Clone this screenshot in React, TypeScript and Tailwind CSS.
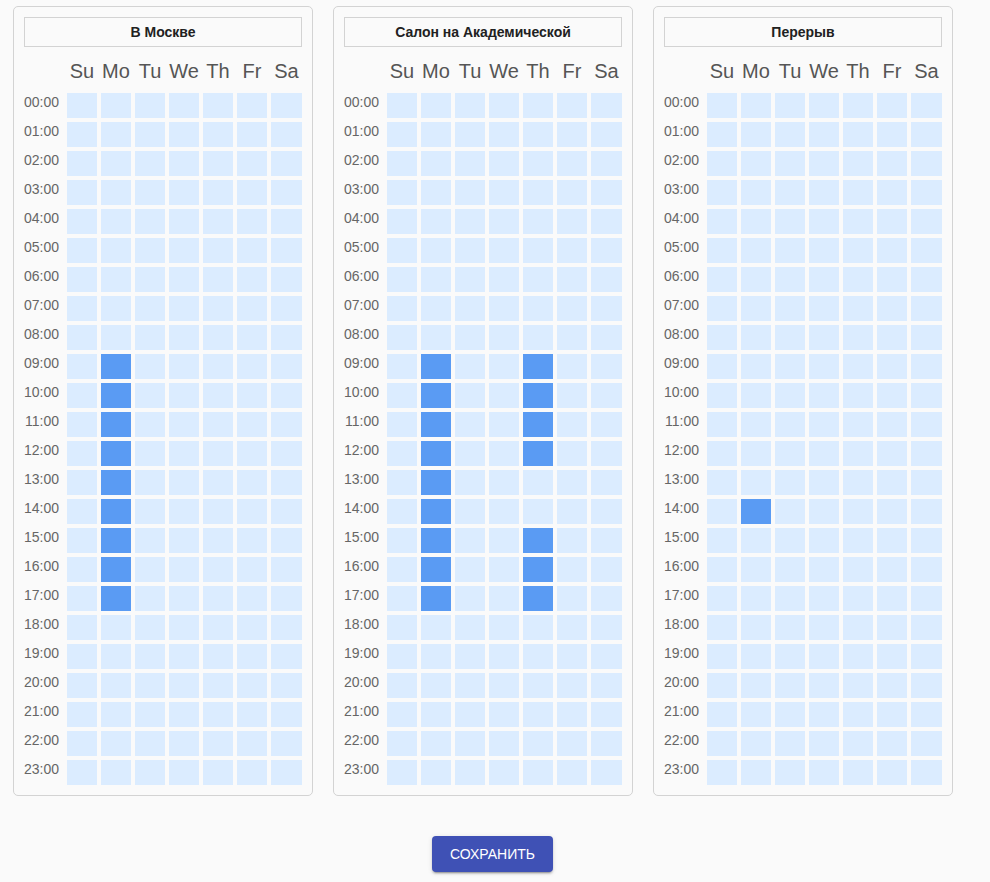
import { useState } from "react";

type Slots = Record<string, boolean>;

interface Schedule {
  title: string;
  slots: Slots;
}

const DAYS = ["Su", "Mo", "Tu", "We", "Th", "Fr", "Sa"];
const HOURS = Array.from({ length: 24 }, (_, h) => `${String(h).padStart(2, "0")}:00`);

// Marks the hours from..to (inclusive) of one day as busy.
function range(day: string, from: number, to: number): Slots {
  const slots: Slots = {};
  for (let h = from; h <= to; h++) slots[`${day}-${HOURS[h]}`] = true;
  return slots;
}

const SCHEDULES: Schedule[] = [
  { title: "В Москве", slots: range("Mo", 9, 17) },
  {
    title: "Салон на Академической",
    slots: { ...range("Mo", 9, 17), ...range("Th", 9, 12), ...range("Th", 15, 17) },
  },
  { title: "Перерыв", slots: range("Mo", 14, 14) },
];

function ScheduleCard({ title, slots: initial }: Schedule) {
  const [slots, setSlots] = useState<Slots>(initial);
  const toggle = (key: string) => setSlots((s) => ({ ...s, [key]: !s[key] }));

  return (
    <section className="w-[300px] rounded-[5px] border border-[#d3d3d3] p-[10px]">
      <h2 className="border border-[#d3d3d3] text-center text-sm leading-7 font-bold text-[#212121]">
        {title}
      </h2>
      <table
        aria-label={title}
        className="-mx-1 -mb-1 w-[calc(100%+8px)] table-fixed border-separate border-spacing-1"
      >
        <colgroup>
          <col className="w-[39px]" />
          {DAYS.map((day) => (
            <col key={day} className={day === "Sa" ? "" : "w-[30px]"} />
          ))}
        </colgroup>
        <thead>
          <tr className="h-[38px]">
            <td className="p-0" />
            {DAYS.map((day) => (
              <th
                key={day}
                scope="col"
                className="p-0 pt-0.5 align-middle text-xl leading-6 font-normal"
              >
                <span className="flex justify-center">{day}</span>
              </th>
            ))}
          </tr>
        </thead>
        <tbody>
          {HOURS.map((hour) => (
            <tr key={hour} className="h-[25px]">
              <th
                scope="row"
                className="p-0 pr-1 text-right align-top text-sm leading-[18px] font-normal text-[#666]"
              >
                {hour}
              </th>
              {DAYS.map((day) => {
                const key = `${day}-${hour}`;
                return (
                  <td key={day} className="p-0">
                    <button
                      type="button"
                      aria-label={`${day} ${hour}`}
                      aria-pressed={!!slots[key]}
                      onClick={() => toggle(key)}
                      className={`block h-[25px] w-full cursor-pointer ${
                        slots[key] ? "bg-[#5a9bf3]" : "bg-[#dbecff]"
                      }`}
                    />
                  </td>
                );
              })}
            </tr>
          ))}
        </tbody>
      </table>
    </section>
  );
}

export default function App() {
  return (
    <main className="min-h-screen bg-[#fafafa] pt-[6px] pr-[18px] pb-[10px] pl-[13px] font-['Liberation_Sans',Arial,sans-serif] text-[#555]">
      <div className="flex flex-wrap gap-5">
        {SCHEDULES.map((schedule) => (
          <ScheduleCard key={schedule.title} {...schedule} />
        ))}
      </div>
      <div className="mt-10 flex justify-center">
        <button
          type="button"
          className="h-9 cursor-pointer rounded bg-[#3f51b5] px-[18px] text-sm text-white uppercase shadow-[0_3px_1px_-2px_rgba(0,0,0,0.2),0_2px_2px_0_rgba(0,0,0,0.14),0_1px_5px_0_rgba(0,0,0,0.12)]"
        >
          Сохранить
        </button>
      </div>
    </main>
  );
}
